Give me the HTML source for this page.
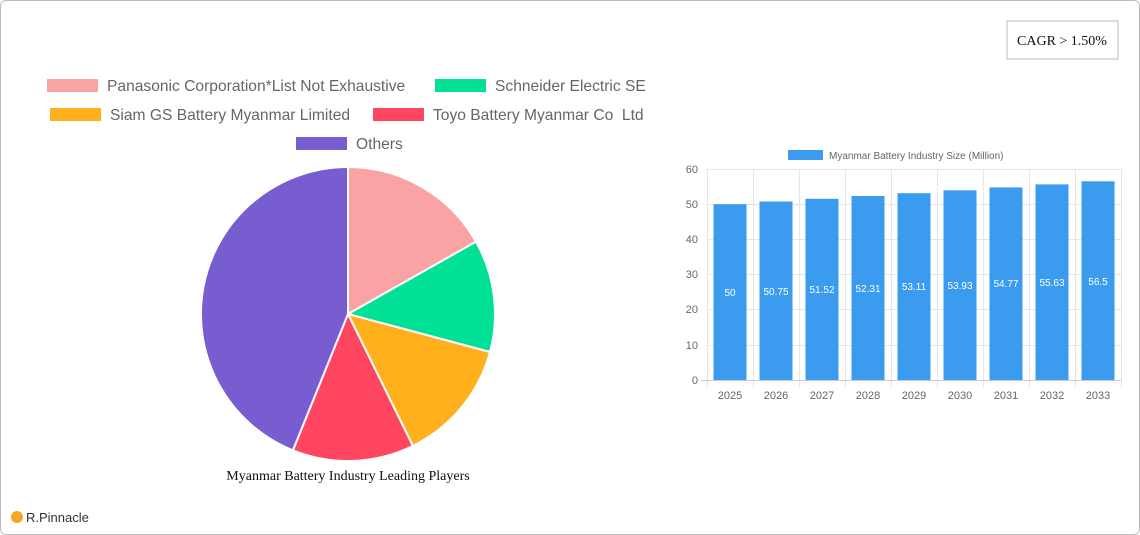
<!DOCTYPE html>
<html><head><meta charset="utf-8"><style>
body{margin:0;background:#fff;}
.wrap{position:relative;width:1138px;height:533px;border:1px solid #bbb;border-radius:6px;overflow:hidden;background:#fff;}
svg text{font-family:"Liberation Sans",sans-serif;}
</style></head><body><div class="wrap">
<svg width="1140" height="535" viewBox="0 0 1140 535" style="position:absolute;left:-1px;top:-1px">
<rect x="1007" y="21" width="111" height="38" fill="#fff" stroke="#bbb"/>
<text x="1062" y="45" text-anchor="middle" font-size="14" fill="#111" style="font-family:'Liberation Serif',serif">CAGR &gt; 1.50%</text>
<g font-size="15.6" fill="#666">
<rect x="47" y="79" width="51" height="13" fill="#f9a3a4"/><text x="107" y="91">Panasonic Corporation*List Not Exhaustive</text>
<rect x="435" y="79" width="51" height="13" fill="#00e096"/><text x="495" y="91">Schneider Electric SE</text>
<rect x="50" y="108" width="51" height="13" fill="#ffb01c"/><text x="110" y="120">Siam GS Battery Myanmar Limited</text>
<rect x="373" y="108" width="51" height="13" fill="#ff4560"/><text x="433" y="120" style="white-space:pre">Toyo Battery Myanmar Co  Ltd</text>
<rect x="296" y="137" width="51" height="13" fill="#775dd0"/><text x="356" y="149">Others</text>
</g>
<g stroke="#fff" stroke-width="2">
<path d="M348,314 L348,167 A147,147 0 0 1 476,241.7 Z" fill="#f9a3a4"/>
<path d="M348,314 L476,241.7 A147,147 0 0 1 490,352 Z" fill="#00e096"/>
<path d="M348,314 L490,352 A147,147 0 0 1 412.9,445.9 Z" fill="#ffb01c"/>
<path d="M348,314 L412.9,445.9 A147,147 0 0 1 292.9,450.3 Z" fill="#ff4560"/>
<path d="M348,314 L292.9,450.3 A147,147 0 0 1 348,167 Z" fill="#775dd0"/>
</g>
<text x="348" y="480" text-anchor="middle" font-size="14" fill="#111" style="font-family:'Liberation Serif',serif">Myanmar Battery Industry Leading Players</text>
<circle cx="17" cy="517" r="6" fill="#f5a623"/>
<text x="26" y="522" font-size="13" fill="#333">R.Pinnacle</text>
<rect x="788" y="150" width="35" height="10" fill="#3a9bef"/>
<text x="829" y="159" font-size="10" fill="#666">Myanmar Battery Industry Size (Million)</text>
<g stroke="#e6e6e6" stroke-width="1">
<line x1="707" y1="169.5" x2="1121" y2="169.5"/><line x1="707" y1="204.5" x2="1121" y2="204.5"/><line x1="707" y1="239.5" x2="1121" y2="239.5"/><line x1="707" y1="274.5" x2="1121" y2="274.5"/><line x1="707" y1="309.5" x2="1121" y2="309.5"/><line x1="707" y1="345.5" x2="1121" y2="345.5"/>
<line x1="707.5" y1="169" x2="707.5" y2="388"/><line x1="753.5" y1="169" x2="753.5" y2="388"/><line x1="799.5" y1="169" x2="799.5" y2="388"/><line x1="845.5" y1="169" x2="845.5" y2="388"/><line x1="891.5" y1="169" x2="891.5" y2="388"/><line x1="937.5" y1="169" x2="937.5" y2="388"/><line x1="983.5" y1="169" x2="983.5" y2="388"/><line x1="1029.5" y1="169" x2="1029.5" y2="388"/><line x1="1075.5" y1="169" x2="1075.5" y2="388"/><line x1="1121.5" y1="169" x2="1121.5" y2="388"/>
</g>
<line x1="701" y1="380.5" x2="1121" y2="380.5" stroke="#ccc"/>
<g font-size="11" fill="#666" text-anchor="end">
<text x="698" y="173">60</text><text x="698" y="208">50</text><text x="698" y="243">40</text><text x="698" y="278">30</text><text x="698" y="313">20</text><text x="698" y="349">10</text><text x="698" y="384">0</text>
</g>
<g fill="#3a9bef">
<rect x="713.5" y="204.2" width="33" height="175.8"/><rect x="759.5" y="201.5" width="33" height="178.5"/><rect x="805.5" y="198.8" width="33" height="181.2"/><rect x="851.5" y="196" width="33" height="184"/><rect x="897.5" y="193.2" width="33" height="186.8"/><rect x="943.5" y="190.3" width="33" height="189.7"/><rect x="989.5" y="187.4" width="33" height="192.6"/><rect x="1035.5" y="184.4" width="33" height="195.6"/><rect x="1081.5" y="181.3" width="33" height="198.7"/>
</g>
<g font-size="10" fill="#fff" text-anchor="middle">
<text x="730" y="296">50</text><text x="776" y="295">50.75</text><text x="822" y="293">51.52</text><text x="868" y="292">52.31</text><text x="914" y="290">53.11</text><text x="960" y="289">53.93</text><text x="1006" y="287">54.77</text><text x="1052" y="286">55.63</text><text x="1098" y="285">56.5</text>
</g>
<g font-size="11" fill="#666" text-anchor="middle">
<text x="730" y="399">2025</text><text x="776" y="399">2026</text><text x="822" y="399">2027</text><text x="868" y="399">2028</text><text x="914" y="399">2029</text><text x="960" y="399">2030</text><text x="1006" y="399">2031</text><text x="1052" y="399">2032</text><text x="1098" y="399">2033</text>
</g>
</svg>
</div></body></html>
